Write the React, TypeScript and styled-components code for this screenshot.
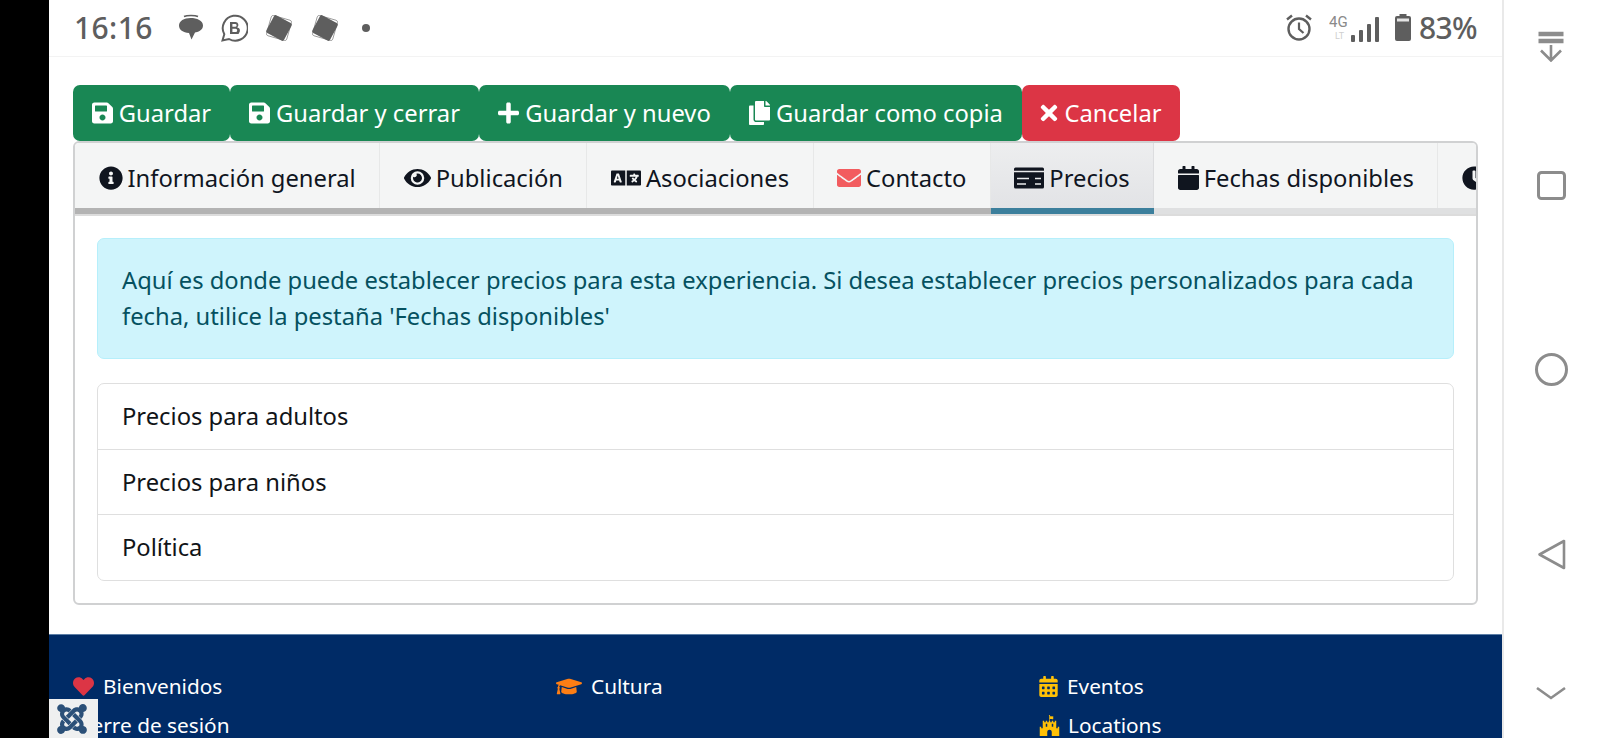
import React from "react";
import styled, { createGlobalStyle } from "styled-components";
import {
  FaSave, FaPlus, FaCopy, FaTimes, FaInfoCircle, FaEye, FaLanguage, FaEnvelope,
  FaCalendar, FaClock, FaHeart, FaGraduationCap, FaCalendarAlt,
  FaFortAwesome, FaJoomla,
} from "react-icons/fa";

const Global = createGlobalStyle`
  html, body { margin: 0; padding: 0; background: #fff; }
  body { font-family: "Noto Sans", "Open Sans", sans-serif; overflow: hidden; }
  * { box-sizing: border-box; }
`;

const Screen = styled.div`
  display: flex;
  width: 1600px;
  height: 738px;
  overflow: hidden;
`;
const Cutout = styled.div`
  width: 49px;
  background: #000;
  flex: none;
`;
const Main = styled.div`
  position: relative;
  width: 1453px;
  flex: none;
  display: flex;
  flex-direction: column;
  background: #fff;
`;
const NavBar = styled.nav`
  width: 98px;
  flex: none;
  background: #fff;
  border-left: 2px solid #e9e9e9;
  display: flex;
  flex-direction: column;
  align-items: center;
  color: #8c8c8c;
  padding-top: 31px;
  padding-right: 2px;
`;
const NavSlot = styled.div<{ $h: number }>`
  height: ${(p) => p.$h}px;
  display: flex;
  justify-content: center;
`;

const StatusBar = styled.header`
  height: 57px;
  flex: none;
  display: flex;
  align-items: center;
  padding: 0 25px 1px 25px;
  border-bottom: 1px solid #f3f3f3;
  color: #5e5e5e;
`;
const StatusText = styled.span<{ $tight?: boolean }>`
  font-size: 30px;
  font-weight: 500;
  line-height: 1;
  letter-spacing: ${(p) => (p.$tight ? "-0.6px" : "0.4px")};
`;
const StatusLeft = styled.div`
  display: flex;
  align-items: center;
  gap: 16px;
  margin-left: 25px;
`;
const StatusRight = styled.div`
  display: flex;
  align-items: center;
  margin-left: auto;
`;
const StatusIcon = styled.svg<{ $after?: number; $before?: number }>`
  display: block;
  flex: none;
  margin-right: ${(p) => p.$after ?? 0}px;
  margin-left: ${(p) => p.$before ?? 0}px;
`;

const Content = styled.main`
  padding: 28px 24px 0;
  height: 577px;
  flex: none;
`;
const Toolbar = styled.div`
  display: flex;
  height: 56px;
`;
const ActionButton = styled.button<{ $danger?: boolean; $w: number; $icon: number }>`
  width: ${(p) => p.$w}px;
  display: flex;
  align-items: center;
  justify-content: center;
  gap: 6px;
  border: 0;
  padding: 0;
  border-radius: 7px;
  color: #fff;
  background: ${(p) => (p.$danger ? "#dc3545" : "#198754")};
  font-family: inherit;
  font-size: 23.75px;
  line-height: 36px;
  svg { height: 24px; width: ${(p) => p.$icon}px; flex: none; }
`;

const TabBox = styled.section`
  height: 464px;
  border: 2px solid #d0d1d2;
  border-radius: 6px;
  overflow: hidden;
`;
const TabStrip = styled.div`
  display: flex;
  height: 73px;
  overflow: hidden;
  border-bottom: 2px solid #dcdcdc;
`;
const Tab = styled.div<{ $state: "seen" | "active" | "idle"; $icon: number }>`
  position: relative;
  flex: none;
  display: flex;
  align-items: center;
  gap: 5px;
  height: 71px;
  padding: 0 23.5px 2px;
  color: #10151f;
  font-size: 23.75px;
  white-space: nowrap;
  background: ${(p) =>
    p.$state === "active" ? "linear-gradient(#edeeef, #e1e2e5)" : "#f4f5f5"};
  border-right: 1px solid ${(p) => (p.$state === "active" ? "#dcdddf" : "#e7e8e8")};
  svg { height: 24px; width: ${(p) => p.$icon}px; flex: none; }
  &::after {
    content: "";
    position: absolute;
    left: 0;
    right: -1px;
    bottom: 0;
    height: 6px;
    background: ${(p) =>
      p.$state === "seen" ? "#b3b3b3" : p.$state === "active" ? "#3c7f9c" : "#dfe0e1"};
  }
`;
const EnvelopeIcon = styled(FaEnvelope)`
  color: #f25c5f;
`;
const TabPanel = styled.div`
  padding: 22px 22px 0;
`;
const Alert = styled.div`
  height: 121px;
  padding: 24px;
  background: #cff4fc;
  border: 1px solid #b6effb;
  border-radius: 7px;
  color: #055160;
  font-size: 23.75px;
  line-height: 35.5px;
`;
const List = styled.ul`
  list-style: none;
  margin: 24px 0 0;
  padding: 0;
  border: 1px solid #dfdfdf;
  border-radius: 7px;
`;
const ListRow = styled.li`
  height: 65.2px;
  display: flex;
  align-items: center;
  padding: 0 24px;
  color: #111418;
  font-size: 23.75px;
  &:first-child { padding-bottom: 2px; }
  & + & { border-top: 1px solid #dfdfdf; }
`;

const Footer = styled.footer`
  flex: 1;
  background: #002b66;
  border-top: 1px solid #5c7ea6;
  display: grid;
  grid-template-columns: 483px 483px 1fr;
  padding: 36px 0 0 24px;
  min-height: 0;
  overflow: hidden;
`;
const FooterColumn = styled.div`
  display: flex;
  flex-direction: column;
  gap: 9px;
`;
const FooterLink = styled.a<{ $tint: string; $icon: number; $gap: number }>`
  display: flex;
  align-items: center;
  gap: ${(p) => p.$gap}px;
  color: #fff;
  font-size: 20.8px;
  line-height: 30px;
  white-space: nowrap;
  svg { height: 21px; width: ${(p) => p.$icon}px; flex: none; color: ${(p) => p.$tint}; }
`;
const JoomlaBadge = styled.div`
  position: absolute;
  left: 0;
  bottom: 0;
  width: 49px;
  height: 39px;
  background: #eff0f0;
  color: #2b5078;
  display: flex;
  justify-content: center;
  padding: 3px 3px 0 0;
  svg { width: 34px; height: 34px; }
`;

const MoneyIcon = () => (
  <svg viewBox="0 0 30 21">
    <rect width="30" height="21" rx="1.500" fill="currentColor" />
    <path d="M0 4h30M3 11h12M3 16.500h9M21 11h6M21 16.500h6" stroke="#e9eaeb" strokeWidth="1.300" fill="none" />
  </svg>
);

const tabs: { key: string; label?: string; icon: React.ReactNode; width: number; state: "seen" | "active" | "idle" }[] = [
  { key: "info", label: "Información general", icon: <FaInfoCircle />, width: 24, state: "seen" },
  { key: "pub", label: "Publicación", icon: <FaEye />, width: 27, state: "seen" },
  { key: "asoc", label: "Asociaciones", icon: <FaLanguage />, width: 30, state: "seen" },
  { key: "cont", label: "Contacto", icon: <EnvelopeIcon />, width: 24, state: "seen" },
  { key: "prec", label: "Precios", icon: <MoneyIcon />, width: 30, state: "active" },
  { key: "fech", label: "Fechas disponibles", icon: <FaCalendar />, width: 21, state: "idle" },
  { key: "hora", icon: <FaClock />, width: 24, state: "idle" },
];

const Bubble = () => (
  <StatusIcon width="26" height="27" viewBox="0 0 26 27">
    <path d="M6 2.500c3-1.500 11-1.500 14 0" fill="none" stroke="#5e5e5e" strokeWidth="1.500" />
    <path d="M12.500 4C19 4 25 6.500 25 11.500S19.500 18 17 18.500L13.500 25.500 11 19C5 18.500 1 16 1 11.500S6 4 12.500 4Z" fill="#5e5e5e" />
  </StatusIcon>
);
const BusinessChat = () => (
  <StatusIcon width="28" height="28" viewBox="0 0 28 28">
    <path d="M2.500 26.500l1.800-6.300A12.500 12.500 0 1 1 9 25z" fill="none" stroke="#5e5e5e" strokeWidth="2" />
    <path d="M10 8h5.500a3 3 0 0 1 1.700 5.400A3.200 3.200 0 0 1 15.800 20H10zM12.400 10v2.800h2.800a1.400 1.400 0 0 0 0-2.800zM12.400 14.800V18h3.200a1.600 1.600 0 0 0 0-3.200z" fill="#5e5e5e" fillRule="evenodd" />
  </StatusIcon>
);
const Tilted = () => (
  <StatusIcon width="30" height="30" viewBox="0 0 30 30">
    <rect x="4.500" y="4.500" width="21" height="21" rx="2" fill="none" stroke="#9a9a9a" strokeWidth="0.900" transform="rotate(16 15 15)" />
    <rect x="5" y="5" width="20" height="20" rx="2" fill="#5e5e5e" transform="rotate(28 15 15)" />
  </StatusIcon>
);
const Dot = () => (
  <StatusIcon $before={6} width="8" height="8" viewBox="0 0 8 8">
    <circle cx="4" cy="4" r="4" fill="#5e5e5e" />
  </StatusIcon>
);
const Alarm = () => (
  <StatusIcon $after={17} width="26" height="27" viewBox="0 0 26 27">
    <circle cx="13" cy="15" r="10.500" fill="none" stroke="#5e5e5e" strokeWidth="2.400" />
    <path d="M13 8.500V15l4.500 4" fill="none" stroke="#5e5e5e" strokeWidth="2.200" />
    <path d="M1 5.500 6 1.500M25 5.500 20 1.500" fill="none" stroke="#5e5e5e" strokeWidth="2.400" />
  </StatusIcon>
);
const Signal = () => (
  <StatusIcon $after={15} width="51" height="28" viewBox="0 0 51 28">
    <text x="0" y="13" fontFamily="Roboto, sans-serif" fontSize="15" fill="#8a8a8a">4G</text>
    <text x="6" y="25" fontFamily="Roboto, sans-serif" fontSize="9" fill="#cfcfcf">LT</text>
    <rect x="22" y="21" width="4" height="7" rx="1" fill="#5e5e5e" />
    <rect x="30" y="16" width="4" height="12" rx="1" fill="#5e5e5e" />
    <rect x="38" y="10" width="4" height="18" rx="1" fill="#5e5e5e" />
    <rect x="46" y="3" width="4" height="25" rx="1" fill="#5e5e5e" />
  </StatusIcon>
);
const Battery = () => (
  <StatusIcon $after={8} width="16" height="27" viewBox="0 0 16 27">
    <rect x="4.500" y="0" width="7" height="3" fill="#5e5e5e" />
    <rect x="0" y="2" width="16" height="25" rx="2" fill="#5e5e5e" />
    <rect x="2" y="4.500" width="12" height="3" fill="#e4e4e4" />
  </StatusIcon>
);

const PullDown = () => (
  <svg width="26" height="31" viewBox="0 0 26 31" fill="none" stroke="currentColor">
    <path d="M0.500 3h25M0.500 10h25" strokeWidth="4.500" />
    <path d="M13 14v15M3 19.500l10 10 10-10" strokeWidth="2.600" />
  </svg>
);
const SquareKey = () => (
  <svg width="29" height="29" viewBox="0 0 29 29" fill="none" stroke="currentColor">
    <rect x="1.500" y="1.500" width="26" height="26" rx="3" strokeWidth="3" />
  </svg>
);
const CircleKey = () => (
  <svg width="33" height="33" viewBox="0 0 33 33" fill="none" stroke="currentColor">
    <circle cx="16.500" cy="16.500" r="15" strokeWidth="3" />
  </svg>
);
const BackKey = () => (
  <svg width="29" height="31" viewBox="0 0 29 31" fill="none" stroke="currentColor">
    <path d="M27 2v27L2.500 15.500z" strokeWidth="2.600" strokeLinejoin="round" />
  </svg>
);
const ChevronKey = () => (
  <svg width="30" height="16" viewBox="0 0 30 16" fill="none" stroke="currentColor">
    <path d="M1 2l14 10L29 2" strokeWidth="2.600" />
  </svg>
);

export default function App() {
  return (
    <Screen>
      <Global />
      <Cutout />
      <Main>
        <StatusBar>
          <StatusText>16:16</StatusText>
          <StatusLeft>
            <Bubble />
            <BusinessChat />
            <Tilted />
            <Tilted />
            <Dot />
          </StatusLeft>
          <StatusRight>
            <Alarm />
            <Signal />
            <Battery />
            <StatusText $tight>83%</StatusText>
          </StatusRight>
        </StatusBar>
        <Content>
          <Toolbar>
            <ActionButton $w={157} $icon={21}><FaSave />Guardar</ActionButton>
            <ActionButton $w={249} $icon={21}><FaSave />Guardar y cerrar</ActionButton>
            <ActionButton $w={251} $icon={21}><FaPlus />Guardar y nuevo</ActionButton>
            <ActionButton $w={292} $icon={21}><FaCopy />Guardar como copia</ActionButton>
            <ActionButton $w={158} $icon={18} $danger><FaTimes />Cancelar</ActionButton>
          </Toolbar>
          <TabBox>
            <TabStrip>
              {tabs.map((t) => (
                <Tab key={t.key} $state={t.state} $icon={t.width}>
                  {t.icon}
                  {t.label}
                </Tab>
              ))}
            </TabStrip>
            <TabPanel>
              <Alert>
                Aquí es donde puede establecer precios para esta experiencia. Si desea establecer precios personalizados para cada fecha, utilice la pestaña 'Fechas disponibles'
              </Alert>
              <List>
                <ListRow>Precios para adultos</ListRow>
                <ListRow>Precios para niños</ListRow>
                <ListRow>Política</ListRow>
              </List>
            </TabPanel>
          </TabBox>
        </Content>
        <Footer>
          <FooterColumn>
            <FooterLink $tint="#dc3545" $icon={21} $gap={9}><FaHeart />Bienvenidos</FooterLink>
            <FooterLink $tint="#fff" $icon={21} $gap={9}>Cierre de sesión</FooterLink>
          </FooterColumn>
          <FooterColumn>
            <FooterLink $tint="#fd7e14" $icon={26} $gap={9}><FaGraduationCap />Cultura</FooterLink>
          </FooterColumn>
          <FooterColumn>
            <FooterLink $tint="#ffc107" $icon={19} $gap={9}><FaCalendarAlt />Eventos</FooterLink>
            <FooterLink $tint="#ffc107" $icon={21} $gap={8}><FaFortAwesome />Locations</FooterLink>
          </FooterColumn>
        </Footer>
        <JoomlaBadge><FaJoomla /></JoomlaBadge>
      </Main>
      <NavBar>
        <NavSlot $h={140}><PullDown /></NavSlot>
        <NavSlot $h={182}><SquareKey /></NavSlot>
        <NavSlot $h={186}><CircleKey /></NavSlot>
        <NavSlot $h={147}><BackKey /></NavSlot>
        <NavSlot $h={30}><ChevronKey /></NavSlot>
      </NavBar>
    </Screen>
  );
}
